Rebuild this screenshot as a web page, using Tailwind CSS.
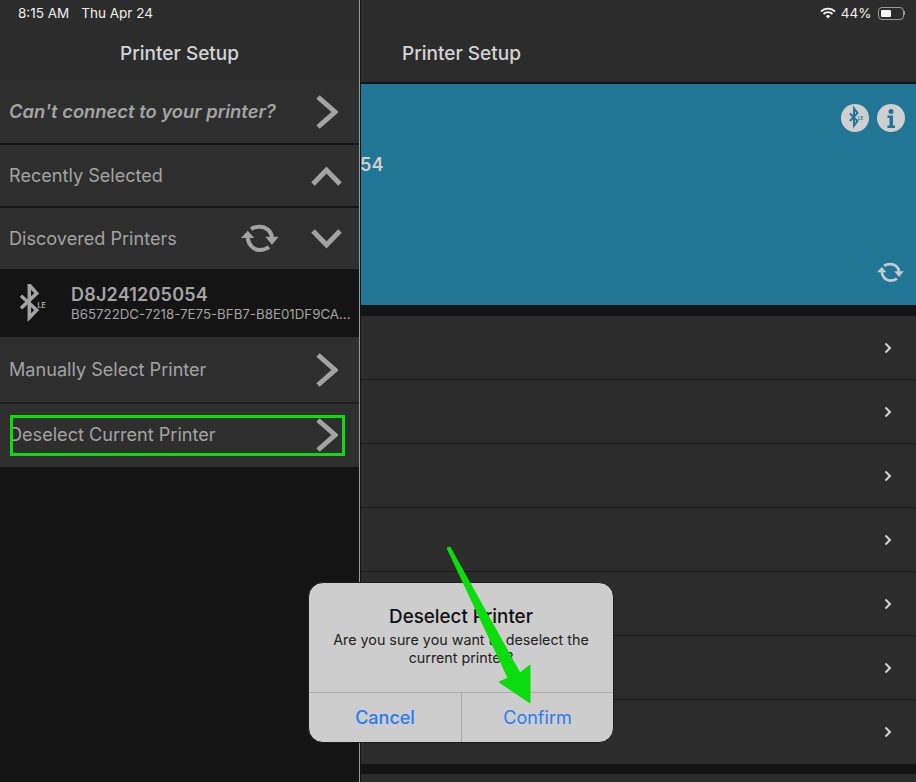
<!DOCTYPE html>
<html lang="en">
<head>
    <meta charset="UTF-8">
    <title>Printer Setup</title>
    <script src="https://cdn.jsdelivr.net/npm/@tailwindcss/browser@4"></script>
</head>
<body class="bg-[#141414] font-['Inter','Liberation_Sans',sans-serif]">
    <div class="relative w-[916px] h-[782px] overflow-hidden flex">

        <!-- Left panel -->
        <div class="w-[359px] h-full shrink-0 bg-[#141414] flex flex-col text-[#a3a3a3] text-[18.100px]">
            <div class="h-[82px] bg-[#2c2c2c] flex items-center justify-center pt-[27px] text-[19px] font-medium text-[#d4d4d4]">Printer Setup</div>
            <div class="h-[63px] bg-[#2e2e2e] border-b-2 border-[#161616] flex items-center justify-between pb-[1px] pl-[9px] pr-[21px]">
                <span class="italic font-semibold text-[18.400px]">Can't connect to your printer?</span>
                <svg class="w-[22px] h-[34px]" viewBox="0 0 22 34" fill="none" stroke="#a3a3a3" stroke-width="5"><path d="M2 2l17 15-17 15"/></svg>
            </div>
            <div class="h-[63px] bg-[#2e2e2e] border-b-2 border-[#161616] flex items-center justify-between pl-[9px] pr-[17px]">
                <span>Recently Selected</span>
                <svg class="w-[31px] h-[20px]" viewBox="0 0 31 20" fill="none" stroke="#a3a3a3" stroke-width="5"><path d="M2 18L15.500 4 29 18"/></svg>
            </div>
            <div class="h-[61px] bg-[#2e2e2e] flex items-center pl-[9px] pr-[17px]">
                <span class="flex-1">Discovered Printers</span>
                <svg class="w-[38px] h-[29px] mr-[32px]" viewBox="0 0 38 29" fill="none" stroke="#a3a3a3" stroke-width="4">
                    <path d="M10 5Q14 2.700 18.500 2.700C25 2.700 30 7 31 13"/>
                    <path d="M6.700 14C7.500 21 13 26 18.500 26Q24 26 28 23"/>
                    <path d="M0 14L13.300 14 6.700 6.700z" fill="#a3a3a3" stroke="none"/>
                    <path d="M24.300 12.700L37.700 12.700 31 20.700z" fill="#a3a3a3" stroke="none"/>
                </svg>
                <svg class="w-[31px] h-[20px]" viewBox="0 0 31 20" fill="none" stroke="#a3a3a3" stroke-width="5"><path d="M2 2l13.500 14L29 2"/></svg>
            </div>
            <div class="h-[68px] bg-[#141414] flex items-center">
                <div class="w-[71px] pl-[18px]">
                    <svg class="w-[30px] h-[38px]" viewBox="0 0 30 38" fill="none" stroke="#a3a3a3" stroke-width="3.500">
                        <path d="M3 11.700L18.700 26 11.300 33.700V1L18.700 9.300 3 24.300"/>
                        <text x="19.500" y="23.500" font-size="7" font-weight="700" fill="#a3a3a3" stroke="none" font-family="Inter">LE</text>
                    </svg>
                </div>
                <div class="min-w-0 flex-1 leading-none">
                    <div class="text-[18px] font-semibold tracking-[0.2px] leading-[22px]">D8J241205054</div>
                    <div class="text-[13.300px] leading-[16px] whitespace-nowrap">B65722DC-7218-7E75-BFB7-B8E01DF9CA...</div>
                </div>
            </div>
            <div class="h-[67px] bg-[#2e2e2e] border-b-2 border-[#1e1e1e] flex items-center justify-between pl-[9px] pr-[21px]">
                <span>Manually Select Printer</span>
                <svg class="w-[22px] h-[34px]" viewBox="0 0 22 34" fill="none" stroke="#a3a3a3" stroke-width="5"><path d="M2 2l17 15-17 15"/></svg>
            </div>
            <div class="h-[63px] bg-[#2e2e2e] flex items-center justify-between pb-[2px] pl-[9px] pr-[21px]">
                <span>Deselect Current Printer</span>
                <svg class="w-[22px] h-[34px]" viewBox="0 0 22 34" fill="none" stroke="#a3a3a3" stroke-width="5"><path d="M2 2l17 15-17 15"/></svg>
            </div>
        </div>

        <!-- Divider -->
        <div class="w-[1px] h-full bg-[#9a9a9a]"></div>
        <div class="w-[1px] h-full bg-[#141414]"></div>

        <!-- Right panel -->
        <div class="flex-1 h-full flex flex-col bg-[#141414]">
            <div class="h-[82px] shrink-0 bg-[#2c2c2c] flex items-center pl-[41px] pt-[27px] text-[19px] font-medium text-[#d4d4d4]">Printer Setup</div>
            <div class="h-[221px] shrink-0 mt-[2px] bg-[#217595] flex flex-col">
                <div class="flex justify-end gap-[8px] pr-[11px] pt-[20px]">
                    <svg class="w-[28px] h-[28px]" viewBox="0 0 28 28">
                        <circle cx="14" cy="14" r="14" fill="#cfcfcf"/>
                        <path d="M9 9.500L16.500 17 13 21.500V4.500L16.500 9 9 17" fill="none" stroke="#217595" stroke-width="2"/>
                        <text x="17" y="16" font-size="4.500" font-weight="700" fill="#217595" font-family="Inter">LE</text>
                    </svg>
                    <svg class="w-[28px] h-[28px]" viewBox="0 0 28 28">
                        <circle cx="14" cy="14" r="14" fill="#cfcfcf"/>
                        <circle cx="14" cy="7.500" r="2.500" fill="#217595"/>
                        <path d="M10.500 11.500h5.500v10h2v2.500h-7.500v-2.500h2v-7.500h-2z" fill="#217595"/>
                    </svg>
                </div>
                <div class="mt-[22px] text-[18px] font-semibold tracking-[0.2px] text-[#cfcfcf] leading-[22px] -ml-[1px]">54</div>
                <div class="flex-1 flex items-end justify-end pr-[12px] pb-[22px]">
                    <svg class="w-[27px] h-[21px]" viewBox="0 0 38 29" fill="none" stroke="#c4ccd0" stroke-width="4">
                        <path d="M10 5Q14 2.700 18.500 2.700C25 2.700 30 7 31 13"/>
                        <path d="M6.700 14C7.500 21 13 26 18.500 26Q24 26 28 23"/>
                        <path d="M0 14L13.300 14 6.700 6.700z" fill="#c4ccd0" stroke="none"/>
                        <path d="M24.300 12.700L37.700 12.700 31 20.700z" fill="#c4ccd0" stroke="none"/>
                    </svg>
                </div>
            </div>
            <div class="mt-[11px] flex flex-col shrink-0">
                <div class="h-[64px] bg-[#2c2c2c] border-b border-[#1a1a1a] flex items-center justify-end pr-[24px]"><svg class="w-[8px] h-[12px]" viewBox="0 0 8 12" fill="none" stroke="#d4d4d4" stroke-width="2"><path d="M1.500 1.500L6 6l-4.500 4.500"/></svg></div>
                <div class="h-[64px] bg-[#2c2c2c] border-b border-[#1a1a1a] flex items-center justify-end pr-[24px]"><svg class="w-[8px] h-[12px]" viewBox="0 0 8 12" fill="none" stroke="#d4d4d4" stroke-width="2"><path d="M1.500 1.500L6 6l-4.500 4.500"/></svg></div>
                <div class="h-[64px] bg-[#2c2c2c] border-b border-[#1a1a1a] flex items-center justify-end pr-[24px]"><svg class="w-[8px] h-[12px]" viewBox="0 0 8 12" fill="none" stroke="#d4d4d4" stroke-width="2"><path d="M1.500 1.500L6 6l-4.500 4.500"/></svg></div>
                <div class="h-[64px] bg-[#2c2c2c] border-b border-[#1a1a1a] flex items-center justify-end pr-[24px]"><svg class="w-[8px] h-[12px]" viewBox="0 0 8 12" fill="none" stroke="#d4d4d4" stroke-width="2"><path d="M1.500 1.500L6 6l-4.500 4.500"/></svg></div>
                <div class="h-[64px] bg-[#2c2c2c] border-b border-[#1a1a1a] flex items-center justify-end pr-[24px]"><svg class="w-[8px] h-[12px]" viewBox="0 0 8 12" fill="none" stroke="#d4d4d4" stroke-width="2"><path d="M1.500 1.500L6 6l-4.500 4.500"/></svg></div>
                <div class="h-[64px] bg-[#2c2c2c] border-b border-[#1a1a1a] flex items-center justify-end pr-[24px]"><svg class="w-[8px] h-[12px]" viewBox="0 0 8 12" fill="none" stroke="#d4d4d4" stroke-width="2"><path d="M1.500 1.500L6 6l-4.500 4.500"/></svg></div>
                <div class="h-[64px] bg-[#2c2c2c] flex items-center justify-end pr-[24px]"><svg class="w-[8px] h-[12px]" viewBox="0 0 8 12" fill="none" stroke="#d4d4d4" stroke-width="2"><path d="M1.500 1.500L6 6l-4.500 4.500"/></svg></div>
                <div class="h-[10px] bg-[#141414]"></div>
                <div class="h-[20px] bg-[#2c2c2c]"></div>
            </div>
        </div>

        <!-- Status bar -->
        <div class="absolute top-0 left-0 right-0 h-[26px] flex items-center justify-between pl-[18px] pr-[11px] text-[13.500px] text-[#f0f0f0]">
            <div class="flex gap-[12px]"><span>8:15 AM</span><span>Thu Apr 24</span></div>
            <div class="flex items-center gap-[5px]">
                <svg class="w-[16px] h-[12px]" viewBox="0 0 16 12" fill="none" stroke="#f5f5f5" stroke-width="1.800">
                    <path d="M1 4.500a10 10 0 0 1 14 0"/>
                    <path d="M3.500 7a6.500 6.500 0 0 1 9 0"/>
                    <path d="M8 11.500L5.800 9.200a3 3 0 0 1 4.400 0z" fill="#f5f5f5" stroke="none"/>
                </svg>
                <span>44%</span>
                <div class="flex items-center ml-[1px]">
                    <div class="w-[26px] h-[13px] rounded-[4px] border border-[#9a9a9a] p-[2px]"><div class="w-[10px] h-full bg-[#f5f5f5] rounded-[1px]"></div></div>
                    <div class="w-[1.500px] h-[4px] bg-[#9a9a9a]"></div>
                </div>
            </div>
        </div>

        <!-- Green highlight -->
        <div class="absolute left-[10px] top-[415px] w-[335px] h-[41px] border-[3px] border-[#0bdc0b]"></div>

        <!-- Alert -->
        <div class="absolute left-[308px] top-[582px] w-[306px] h-[161px] rounded-[15px] bg-[#cdcdcd] border border-[#1c1c1c] flex flex-col text-center">
            <div class="flex-1 pt-[23px]">
                <div class="text-[18.800px] font-medium text-[#111] leading-[22px]">Deselect Printer</div>
                <div class="text-[14.300px] text-[#222] leading-[18px] mt-[3px] px-[20px]">Are you sure you want to deselect the current printer?</div>
            </div>
            <div class="h-[50px] border-t border-[#adadad] flex text-[18px] text-[#2a7bf6]">
                <div class="w-[153px] border-r border-[#adadad] flex items-center justify-center font-medium">Cancel</div>
                <div class="flex-1 flex items-center justify-center">Confirm</div>
            </div>
        </div>

        <!-- Green arrow -->
        <svg class="absolute left-[440px] top-[540px] w-[100px] h-[170px]" viewBox="0 0 100 170">
            <path d="M7 8L10 7 80 133 90 125 90 163 59 142 68 138z" fill="#0bdc0b" stroke="#0bdc0b" stroke-width="1" stroke-linejoin="round"/>
        </svg>
    </div>
</body>
</html>
